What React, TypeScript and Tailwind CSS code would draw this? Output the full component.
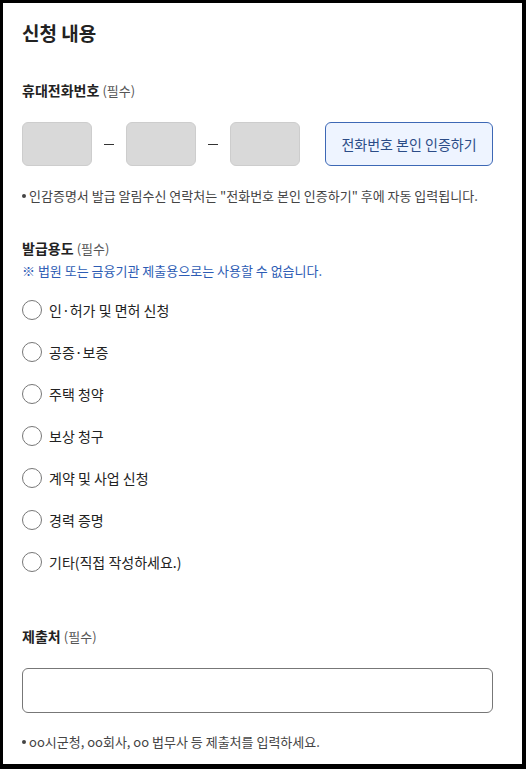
const purposes = [
  '인·허가 및 면허 신청',
  '공증·보증',
  '주택 청약',
  '보상 청구',
  '계약 및 사업 신청',
  '경력 증명',
  '기타(직접 작성하세요.)',
]

function Label({ text }: { text: string }) {
  return (
    <div className="text-[14px] leading-[20px] font-bold text-[#222]">
      {text} <span className="text-[13px] font-normal text-[#555]">(필수)</span>
    </div>
  )
}

function Note({ text, className = '' }: { text: string; className?: string }) {
  return (
    <p className={`text-[13px] leading-[18px] text-[#444] flex items-center ${className}`}>
      <span className="w-[4px] h-[4px] rounded-full bg-[#444] mr-[3px]" />
      {text}
    </p>
  )
}

function Dash() {
  return (
    <div className="w-[34px] flex justify-center">
      <div className="w-[10px] h-[1px] bg-[#333]" />
    </div>
  )
}

export default function App() {
  return (
    <div
      className="min-h-[769px] bg-black pt-[3px] pl-[3px] pr-[4px] pb-[5px]"
      style={{ fontFamily: '"Noto Sans CJK KR", "Noto Sans", sans-serif' }}
    >
      <div className="h-[761px] bg-white pl-[19px] pr-[29px] pt-[17px]">
        <h2 className="text-[19px] leading-[26px] font-bold text-[#222]">신청 내용</h2>

        <div className="mt-[34px]">
          <Label text="휴대전화번호" />
        </div>
        <div className="mt-[21px] flex items-center">
          <div className="w-[70px] h-[44px] rounded-[6px] bg-[#d9d9d9] border border-[#cdcdcd]" />
          <Dash />
          <div className="w-[70px] h-[44px] rounded-[6px] bg-[#d9d9d9] border border-[#cdcdcd]" />
          <Dash />
          <div className="w-[70px] h-[44px] rounded-[6px] bg-[#d9d9d9] border border-[#cdcdcd]" />
          <button className="ml-[25px] w-[168px] h-[44px] rounded-[6px] border border-[#3d68b5] bg-[#eef4ff] text-[14px] text-[#2b4c87]">
            전화번호 본인 인증하기
          </button>
        </div>
        <Note
          className="mt-[21px]"
          text={'인감증명서 발급 알림수신 연락처는 "전화번호 본인 인증하기" 후에 자동 입력됩니다.'}
        />

        <div className="mt-[33px]">
          <Label text="발급용도" />
        </div>
        <p className="mt-[3px] text-[13px] leading-[18px] text-[#2d5cb4]">
          ※ 법원 또는 금융기관 제출용으로는 사용할 수 없습니다.
        </p>

        <div className="mt-[9px] flex flex-col">
          {purposes.map(p => (
            <label key={p} className="h-[42px] flex items-center gap-[7px]">
              <span className="w-[20px] h-[20px] rounded-full border border-[#777] bg-white" />
              <span className="text-[14px] text-[#222]">{p}</span>
            </label>
          ))}
        </div>

        <div className="mt-[43px]">
          <Label text="제출처" />
        </div>
        <input
          type="text"
          className="mt-[21px] block w-[471px] h-[45px] rounded-[6px] border border-[#777] outline-none px-3"
        />
        <Note className="mt-[20px]" text="oo시군청, oo회사, oo 법무사 등 제출처를 입력하세요." />
      </div>
    </div>
  )
}
